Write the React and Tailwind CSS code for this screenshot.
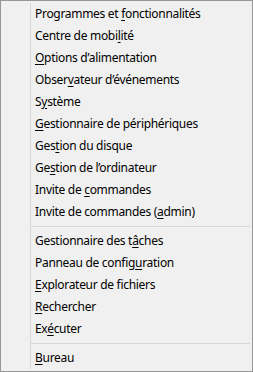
import React from "react";

const g1 = [
  ["Programmes et ", "f", "onctionnalités"],
  ["Centre de mobi", "l", "ité"],
  ["", "O", "ptions d’alimentation"],
  ["Obser", "v", "ateur d’événements"],
  ["S", "y", "stème"],
  ["", "G", "estionnaire de périphériques"],
  ["Ges", "t", "ion du disque"],
  ["Ge", "s", "tion de l’ordinateur"],
  ["Invite de ", "c", "ommandes"],
  ["Invite de commandes (", "a", "dmin)"],
];
const g2 = [
  ["Gestionnaire des t", "â", "ches"],
  ["Panneau de config", "u", "ration"],
  ["", "E", "xplorateur de fichiers"],
  ["", "R", "echercher"],
  ["Ex", "é", "cuter"],
];
const g3 = [["", "B", "ureau"]];

function Item({ t }) {
  return (
    <div className="h-[22px] flex items-center pl-[4px] text-[12px] tracking-[-0.3px] text-black whitespace-nowrap">
      <span>
        {t[0]}
        <span className="underline underline-offset-2">{t[1]}</span>
        {t[2]}
      </span>
    </div>
  );
}

function Sep() {
  return (
    <div className="h-[7px] flex items-center mr-[2px]">
      <div className="w-full h-px bg-[#d7d7d7]" />
    </div>
  );
}

export default function App() {
  return (
    <div
      className="w-[253px] h-[372px] border border-[#979797] bg-[#f0f0f0] flex py-[2px]"
      style={{ fontFamily: '"Noto Sans", "Open Sans", sans-serif' }}
    >
      <div className="w-[30px] shrink-0 border-r border-[#d7d7d7]" />
      <div className="flex-1 flex flex-col">
        {g1.map((t, i) => (
          <Item key={i} t={t} />
        ))}
        <Sep />
        {g2.map((t, i) => (
          <Item key={i} t={t} />
        ))}
        <Sep />
        {g3.map((t, i) => (
          <Item key={i} t={t} />
        ))}
      </div>
    </div>
  );
}
